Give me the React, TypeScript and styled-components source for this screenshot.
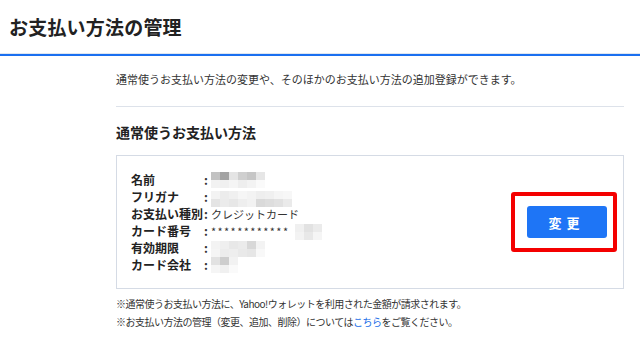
import styled, { createGlobalStyle } from "styled-components";

const GlobalStyle = createGlobalStyle`
  html, body {
    margin: 0;
    padding: 0;
    background: #fff;
  }
  body {
    font-family: "Noto Sans CJK JP", "Noto Sans", sans-serif;
    color: #333;
  }
`;

const Page = styled.div`
  width: 640px;
  height: 337px;
  overflow: hidden;
  background: #fff;
`;

const Header = styled.header`
  height: 53px;
  display: flex;
  align-items: center;
  padding-left: 9px;
  border-bottom: 1px solid #dfe6f0;
`;

const BlueRule = styled.div`
  height: 2px;
  background: #1a6ff0;
`;

const Title = styled.h1`
  margin: 0;
  font-size: 19px;
  font-weight: 700;
  letter-spacing: 0.2px;
  color: #222;
`;

const Content = styled.main`
  margin: 0 16px 0 116px;
  padding-top: 14px;
`;

const Lead = styled.p`
  margin: 0;
  font-size: 11px;
  line-height: 18px;
  padding-bottom: 18px;
  border-bottom: 1px solid #dde2ea;
`;

const SectionTitle = styled.h2`
  margin: 15px 0 13px;
  font-size: 14px;
  line-height: 20px;
  font-weight: 700;
  color: #222;
`;

const CardBox = styled.section`
  height: 134px;
  box-sizing: border-box;
  border: 1px solid #d5dbe5;
  display: flex;
  align-items: center;
  justify-content: space-between;
  padding: 0 6px 0 14px;
`;

const InfoTable = styled.dl`
  margin: 0;
  display: grid;
  grid-template-columns: 72px 1fr;
  grid-auto-rows: 17px;
  align-items: center;
  font-size: 12px;
`;

const Label = styled.dt`
  font-weight: 700;
  white-space: nowrap;
  color: #222;
`;

const Value = styled.dd`
  margin: 0;
  display: flex;
  align-items: center;
  white-space: nowrap;
  font-size: 11px;
  color: #333;
`;

const Colon = styled.span`
  display: inline-block;
  width: 7px;
  font-size: 12px;
  font-weight: 700;
  padding-left: 1px;
`;

const Stars = styled.span`
  letter-spacing: 1.4px;
  font-size: 11px;
  margin-right: 6px;
`;

const MosaicGrid = styled.span<{ $cols: number; $cw: number; $ch: number; $dy: number }>`
  display: inline-grid;
  grid-template-columns: repeat(${(p) => p.$cols}, ${(p) => p.$cw}px);
  grid-auto-rows: ${(p) => p.$ch}px;
  position: relative;
  top: ${(p) => p.$dy}px;
  height: 0;
  align-content: center;
`;

const Cell = styled.span<{ $c: string }>`
  background: ${(p) => p.$c};
`;

const Mosaic = ({
  rows,
  cw = 9,
  ch = 8,
  dy = 0,
}: {
  rows: string[][];
  cw?: number;
  ch?: number;
  dy?: number;
}) => (
  <MosaicGrid $cols={rows[0].length} $cw={cw} $ch={ch} $dy={dy}>
    {rows.flat().map((c, i) => (
      <Cell key={i} $c={c} />
    ))}
  </MosaicGrid>
);

const Highlight = styled.div`
  border: 4px solid #f40000;
  border-radius: 3px;
  padding: 10px 6px 10px 12px;
`;

const ChangeButton = styled.button`
  width: 80px;
  height: 32px;
  border: none;
  border-radius: 3px;
  background: #1e75f6;
  color: #fff;
  font-family: "Noto Sans CJK JP", sans-serif;
  font-size: 13px;
  font-weight: 700;
  letter-spacing: 5px;
  padding-left: 5px;
  cursor: pointer;
`;

const Notes = styled.div`
  margin-top: 6px;
  font-size: 10px;
  letter-spacing: -0.5px;
  line-height: 18px;
  color: #333;
`;

const Link = styled.a`
  color: #1a6ee8;
  text-decoration: none;
`;

const w = "#f2f2f2";

export default function App() {
  return (
    <Page>
      <GlobalStyle />
      <Header>
        <Title>お支払い方法の管理</Title>
      </Header>
      <BlueRule />
      <Content>
        <Lead>通常使うお支払い方法の変更や、そのほかのお支払い方法の追加登録ができます。</Lead>
        <SectionTitle>通常使うお支払い方法</SectionTitle>
        <CardBox>
          <InfoTable>
            <Label>名前</Label>
            <Value>
              <Colon>:</Colon>
              <Mosaic
                rows={[
                  ["#c2c2c2", "#a3a3a3", "#e4e4e4", "#cfcfcf", "#c6c6c6", "#e6e6e6"],
                  [w, "#f0f0f0", "#f5f5f5", "#eeeeee", "#f3f3f3", "#fafafa"],
                ]}
              />
            </Value>
            <Label>フリガナ</Label>
            <Value>
              <Colon>:</Colon>
              <Mosaic
                dy={2}
                rows={[
                  ["#f3f3f3", "#ececec", "#f0f0f0", "#f6f6f6", "#f3f3f3", "#eeeeee", "#f0f0f0", "#f5f5f5", "#f7f7f7"],
                  ["#e4e4e4", "#ebebeb", "#e7e7e7", "#eeeeee", "#f2f2f2", "#d9d9d9", "#dddddd", "#e1e1e1", "#eaeaea"],
                ]}
              />
            </Value>
            <Label>お支払い種別</Label>
            <Value>
              <Colon>:</Colon>クレジットカード
            </Value>
            <Label>カード番号</Label>
            <Value>
              <Colon>:</Colon>
              <Stars>************</Stars>
              <Mosaic
                dy={1}
                rows={[
                  ["#f0f0f0", "#e2e2e2", "#ebebeb"],
                  ["#f3f3f3", "#e8e8e8", "#f5f5f5"],
                ]}
              />
            </Value>
            <Label>有効期限</Label>
            <Value>
              <Colon>:</Colon>
              <Mosaic
                dy={1}
                rows={[
                  ["#f3f3f3", "#efefef", "#e8e8e8", "#ebebeb", "#d8d8d8", "#f3f3f3"],
                  ["#f5f5f5", "#ececec", "#eeeeee", "#e9e9e9", "#e6e6e6", "#f8f8f8"],
                ]}
              />
            </Value>
            <Label>カード会社</Label>
            <Value>
              <Colon>:</Colon>
              <Mosaic
                rows={[
                  ["#e2e2e2", "#cdcdcd", "#f2f2f2"],
                  ["#f5f5f5", "#f0f0f0", "#fafafa"],
                ]}
              />
            </Value>
          </InfoTable>
          <Highlight>
            <ChangeButton>変更</ChangeButton>
          </Highlight>
        </CardBox>
        <Notes>
          <div>※通常使うお支払い方法に、Yahoo!ウォレットを利用された金額が請求されます。</div>
          <div>
            ※お支払い方法の管理（変更、追加、削除）については<Link href="#">こちら</Link>をご覧ください。
          </div>
        </Notes>
      </Content>
    </Page>
  );
}
